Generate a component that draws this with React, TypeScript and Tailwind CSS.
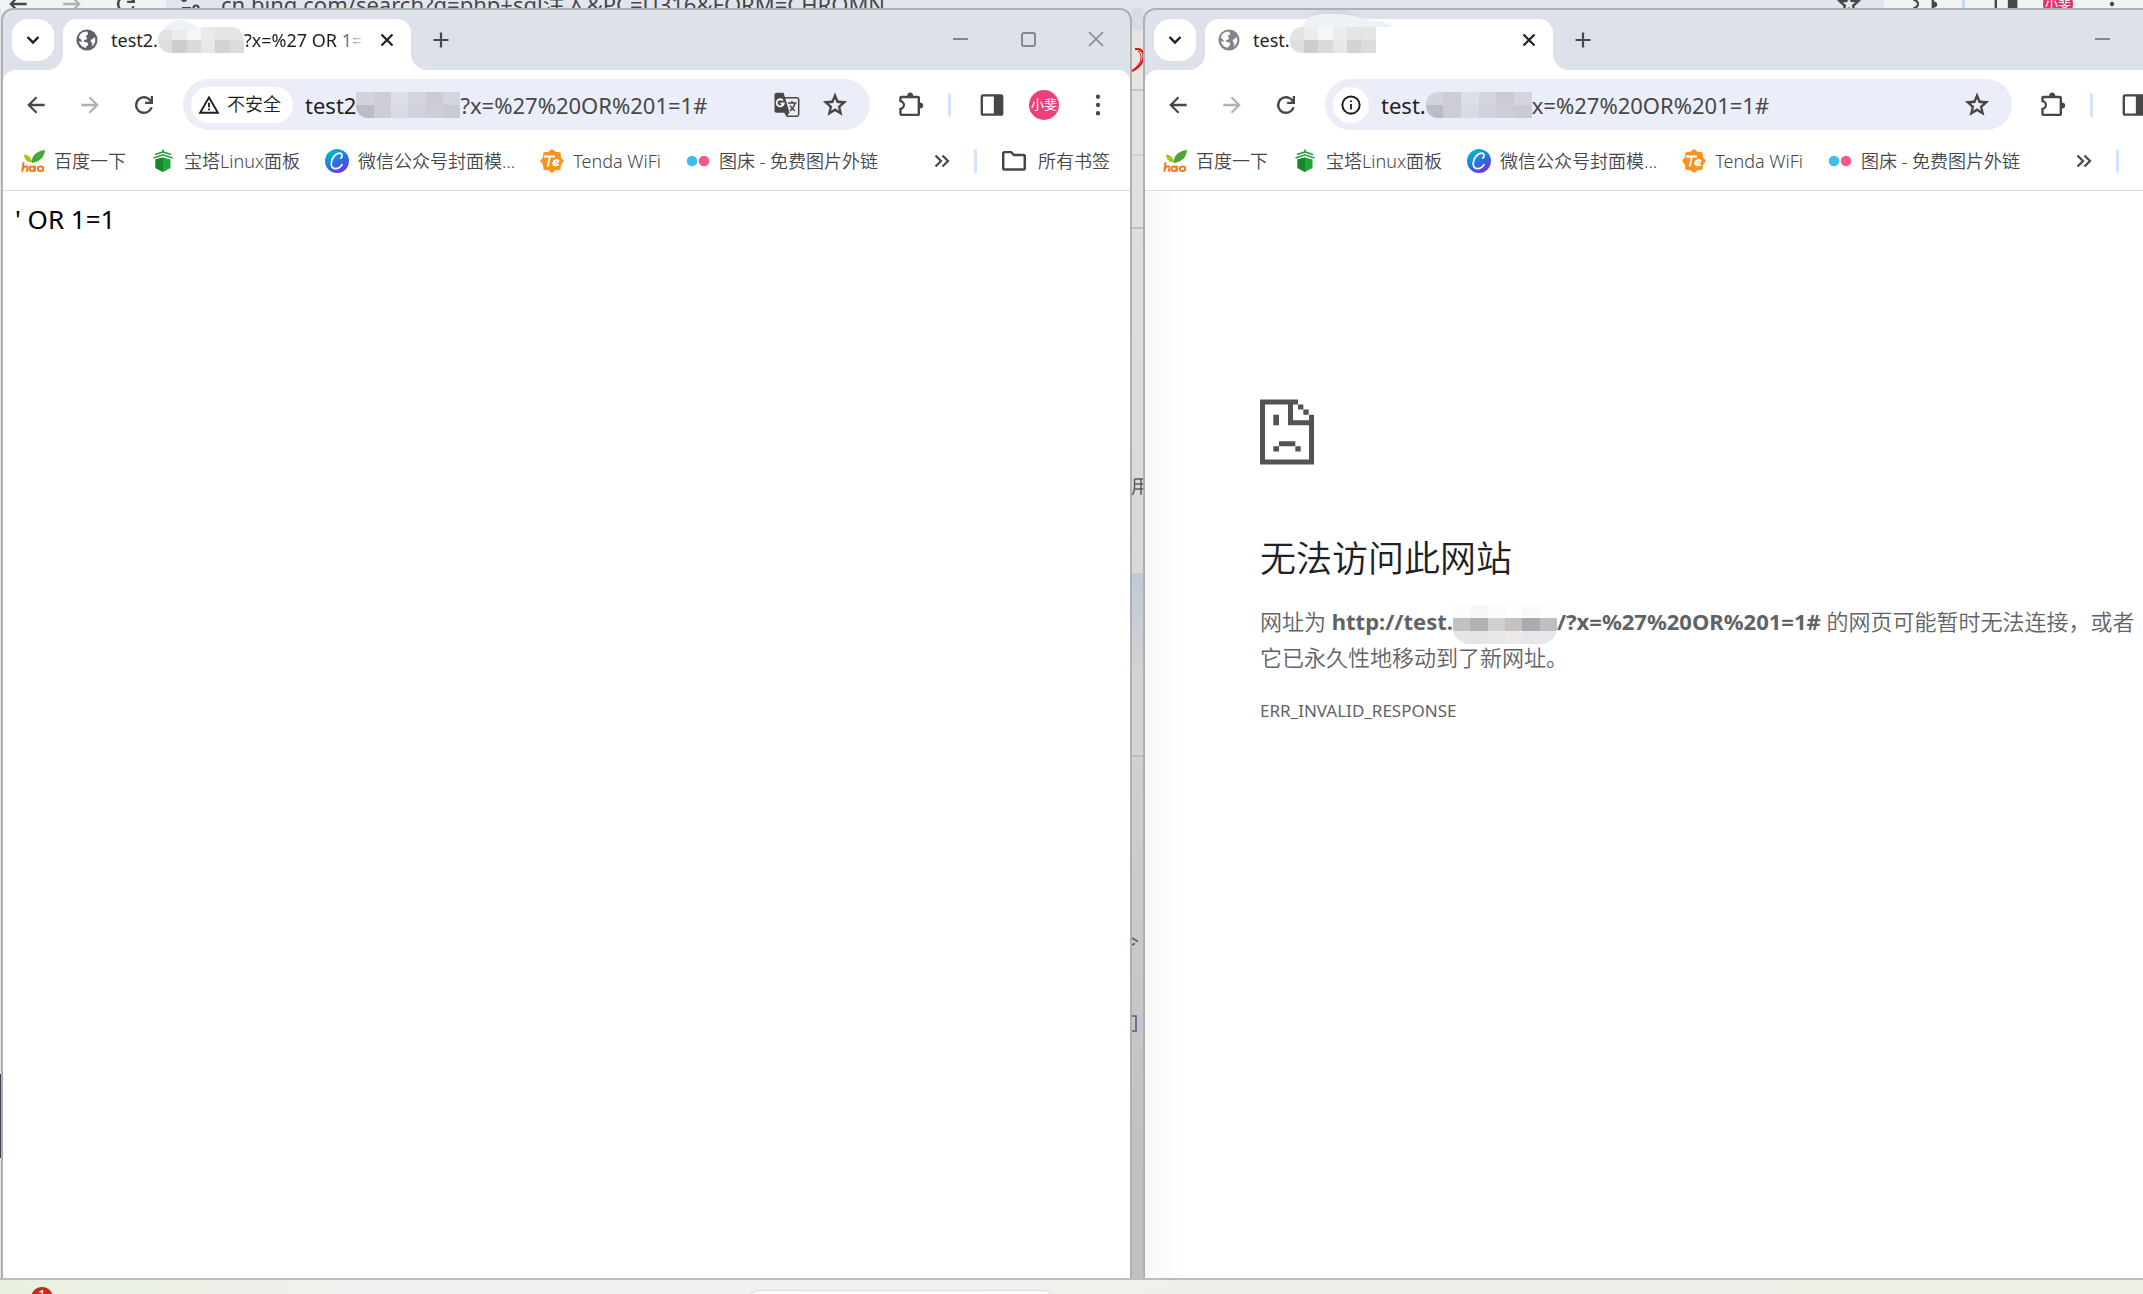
import type { ReactNode } from "react";

type Bookmark = { label: string; icon: ReactNode };

const font = "font-['Noto_Sans','Noto_Sans_CJK_SC',sans-serif]";

/* ---------- toolbar glyphs (24px material grid) ---------- */

function Glyph({ d, className = "size-[26px]" }: { d: string; className?: string }) {
  return (
    <svg viewBox="0 0 24 24" fill="currentColor" fillRule="evenodd" className={className} aria-hidden="true">
      <path d={d} />
    </svg>
  );
}

const BACK = "M20 10.9H7.9l5.3-5.3L11.8 4.1 3.9 12l7.9 7.9 1.4-1.5-5.3-5.3H20z";
const FORWARD = "M4 10.9h12.1l-5.3-5.3 1.4-1.5 7.9 7.9-7.9 7.9-1.4-1.5 5.3-5.3H4z";
const RELOAD =
  "M12 20.3a8.1 8.1 0 0 1-5.9-2.4 8.1 8.1 0 0 1 0-11.8A8.1 8.1 0 0 1 12 3.7c1.2 0 2.4.3 3.5.8a7.8 7.8 0 0 1 2.7 2.1V3.7h2.1v7.3h-7.3V8.9h4.3A6.1 6.1 0 0 0 12 5.9c-1.7 0-3.1.6-4.3 1.8A5.9 5.9 0 0 0 5.9 12c0 1.7.6 3.1 1.8 4.3A5.9 5.9 0 0 0 12 18.1c1.3 0 2.5-.4 3.6-1.1a5.9 5.9 0 0 0 2.2-3H20a8.2 8.2 0 0 1-8 6.3z";
const WARNING = "M.5 21.5 12 1.5l11.5 20zm3.6-2.1h15.8L12 5.6zM11 17.8v-2h2v2zm0-3.3v-5h2v5z";
const INFO =
  "M11 17h2v-6h-2zm1-8a1.1 1.1 0 1 0 0-2.2A1.1 1.1 0 0 0 12 9zm0 13.5A10.5 10.5 0 1 1 12 1.5a10.5 10.5 0 0 1 0 21zm0-2.2a8.3 8.3 0 1 0 0-16.6 8.3 8.3 0 0 0 0 16.6z";
const STAR =
  "m8.4 17.3 3.6-2.2 3.6 2.2-1-4.1 3.2-2.7-4.2-.4L12 6.2l-1.6 3.900-4.200.4 3.200 2.700zM5.100 22l1.900-8-6.200-5.400 8.200-.7L12 .5l3.100 7.400 8.100.7L17 14l1.900 8-6.900-4.200z";
const EXTENSION =
  "M3.2 22.2a2.1 2.1 0 0 1-2-2v-5.5c1.900 0 3.300-1.100 3.300-2.700 0-1.500-1.400-2.600-3.300-2.700V5.500c0-1.200.9-2 2-2h5.300c0-1.700 1-3 2.800-3s2.800 1.300 2.800 3h4.200c1.200 0 2 .8 2 2v4.300c1.700 0 3 1 3 2.700s-1.300 2.800-3 2.800v4.900c0 1.100-.8 2-2 2zm.2-2.200h14.700V5.700H3.400v1.900c1.900.8 3.100 2.400 3.100 4.400s-1.200 3.600-3.100 4.400z";
const SIDE_PANEL = "M3.5 22a2 2 0 0 1-2-2V4c0-1.100.9-2 2-2h17c1.100 0 2 .9 2 2v16a2 2 0 0 1-2 2zm.2-2.200h10V4.200h-10z";
const MENU =
  "M12 6.400a2 2 0 1 1 0-4 2 2 0 0 1 0 4zm0 7.600a2 2 0 1 1 0-4 2 2 0 0 1 0 4zm0 7.600a2 2 0 1 1 0-4 2 2 0 0 1 0 4z";
const FOLDER =
  "M3 21a2.100 2.100 0 0 1-2.100-2V4.800C.9 3.700 1.800 2.700 3 2.700h6.800L12.300 5.300H21c1.100 0 2.100.9 2.100 2V19a2.100 2.100 0 0 1-2.100 2zm.2-2.200h17.600V7.500h-9.400L8.900 4.900H3.200z";

function Globe({ className }: { className: string }) {
  return (
    <svg viewBox="0 0 24 24" className={className} aria-hidden="true">
      <circle cx="12" cy="12" r="11.5" fill="currentColor" />
      <path
        d="M3 9.500C3.500 7 5.500 4.500 8 3.400c1.800-.7 3.500-.6 5-.3-.4 1-.4 2.300.4 3.300-1.300.2-2.600.8-3 1.900 1.300.3 2 1.300 1.300 2.500-.6.9-2 .7-2.800 1.500-.5.600-.2 1.500.3 2 1.300.2 3.700.1 4.100 1.700.3 1.200-.9 2-1.700 2.600-.500.5-.6 1.200-.6 2-4.200-.6-7-3.500-7.900-7.500 1.200.2 2 .9 3.200.7.300-1.400-.9-2.900-3.300-4.300zM20.500 9c.7 2 .7 4 0 6-.7 1.700-1.800 3-3.500 4.200.2-1.400 1-2.300.6-3.700-.3-1-1.500-1.200-1.600-2.200-.2-1.300 1-2.100 2-2.700.6-.4 1.700-.9 2.500-1.600z"
        fill="#fff"
      />
    </svg>
  );
}

function Translate() {
  return (
    <svg viewBox="0 0 26 26" className="size-[26px]" aria-hidden="true">
      <path d="M10 5.700h13a1.700 1.700 0 0 1 1.700 1.700v15.200a1.700 1.700 0 0 1-1.700 1.700H13" fill="none" stroke="#474747" strokeWidth="1.500" />
      <path d="M2.500.8h7l1.400 4.200 4.600 15.800h-13a2 2 0 0 1-2-2v-16c0-1.100.9-2 2-2z" fill="#474747" />
      <path d="M10 20.300h5.500l-3 4.800z" fill="#474747" />
      <path d="M9 8.500A3.600 3.600 0 1 0 9.800 11.500H6.500" fill="none" stroke="#fff" strokeWidth="1.800" />
      <path
        d="M14 11h8.500M18 9v2M21 11c-.8 3.500-2.300 6-5 7.800M16 13.500c1 2.300 2.700 4 5.200 5.500"
        fill="none"
        stroke="#474747"
        strokeWidth="1.400"
      />
    </svg>
  );
}

/* ---------- bookmark favicons ---------- */

const bookmarks: Bookmark[] = [
  {
    label: "百度一下",
    icon: (
      <svg viewBox="0 0 24 24" className="size-6" aria-hidden="true">
        <path d="M3 5.500c4 .3 6.500 2.500 8 6.500L9 13.500C5 12 3 9.500 3 5.500z" fill="#a4c614" />
        <path d="M24 1c-.500 7-5 12-13.500 13C10.500 7 15 2 24 1z" fill="#4ba639" />
        <g fill="none" stroke="#f47a20" strokeWidth="2" strokeLinecap="round">
          <path d="M2.500 14 1.300 22M2 19.500c1.500-3 5-3 4.500-.5L6 22" />
          <ellipse cx="11" cy="19.700" rx="2.500" ry="2.300" />
          <path d="m14.200 17.500-.6 4.500" />
          <ellipse cx="19.500" cy="19.700" rx="2.700" ry="2.300" />
        </g>
      </svg>
    ),
  },
  {
    label: "宝塔Linux面板",
    icon: (
      <svg viewBox="0 0 24 24" className="size-6" aria-hidden="true">
        <path d="M12 .5V3M4 5.500 12 3l8 2.500M2.500 9 12 5.800 21.500 9" fill="none" stroke="#27a043" strokeWidth="1.700" />
        <path d="M4.500 10.500 12 8.500l7.500 2v8.500L12 23l-7.500-4z" fill="#20a53a" />
        <path d="M4.500 10.500 12 8.500V23l-7.500-4z" fill="#178530" />
      </svg>
    ),
  },
  {
    label: "微信公众号封面模...",
    icon: (
      <svg viewBox="0 0 24 24" className="size-6" aria-hidden="true">
        <defs>
          <linearGradient id="canva" x1="0.200" y1="0" x2="0.800" y2="1">
            <stop offset="0" stopColor="#00c4cc" />
            <stop offset="0.550" stopColor="#2a6fe0" />
            <stop offset="1" stopColor="#7d2ae8" />
          </linearGradient>
        </defs>
        <circle cx="12" cy="12" r="12" fill="url(#canva)" />
        <path
          d="M15.800 9c2-1.200 1.600-4.800-1.200-4.800-4 0-8.400 5-8.400 10.200 0 3.400 1.900 5.200 4.500 5.200 2.700 0 4.800-1.500 6.300-4"
          fill="none"
          stroke="#fff"
          strokeWidth="1.700"
          strokeLinecap="round"
        />
      </svg>
    ),
  },
  {
    label: "Tenda WiFi",
    icon: (
      <svg viewBox="0 0 24 24" className="size-6" aria-hidden="true">
        <path
          d="m12 0 3.600 2.800 4.900.5.500 4.900L24 12l-3 3.800-.5 4.900-4.900.5L12 24l-3.600-2.800-4.900-.5-.5-4.900L0 12l3-3.800.5-4.900 4.900-.5z"
          fill="#f7941d"
        />
        <path
          d="M4 7.500h11M9.800 7.500 7.800 17.500M12.500 14.500c3 .3 6.300-1 5.900-2.700-.4-1.500-4.600-.7-5.200 2-.5 2.600 2.800 3.200 5.600 1.700"
          fill="none"
          stroke="#fff"
          strokeWidth="1.900"
        />
      </svg>
    ),
  },
  {
    label: "图床 - 免费图片外链",
    icon: (
      <svg viewBox="0 0 24 24" className="size-6" aria-hidden="true">
        <circle cx="6" cy="12" r="5.300" fill="#3fbdf0" />
        <circle cx="18" cy="12" r="5.300" fill="#f4588f" />
      </svg>
    ),
  },
];

/* ---------- censored host names ---------- */

const mosaicRows = {
  tab: [
    ["bg-[#e2e2e2]", "bg-[#ececec]", "bg-[#f6f6f6]", "bg-[#ebebeb]", "bg-[#e4e4e4]", "bg-[#e6e6e6]"],
    ["bg-[#dedede]", "bg-[#cdcdcd]", "bg-[#dadada]", "bg-[#e8e8e8]", "bg-[#d3d3d3]", "bg-[#dcdcdc]"],
  ],
  url: [
    ["bg-[#d2d4dd]", "bg-[#cdcdd3]", "bg-[#dcdfea]", "bg-[#d4d4da]", "bg-[#cccbd0]", "bg-[#d3d5df]"],
    ["bg-[#bcbcc8]", "bg-[#cccdd5]", "bg-[#d8dbe6]", "bg-[#cfd2dd]", "bg-[#cdced7]", "bg-[#c9cbd4]"],
  ],
  page: [
    ["bg-[#fbfbfb]", "bg-[#f9f8f7]", "bg-[#fafbfb]", "bg-[#fdfdfd]", "bg-[#fafafa]", "bg-[#fdfdfd]"],
    ["bg-[#c1c0c5]", "bg-[#b4b1b1]", "bg-[#d0d0d2]", "bg-[#c4c1be]", "bg-[#a9abb2]", "bg-[#c0bec0]"],
    ["bg-[#e5e5e6]", "bg-[#e5e5e6]", "bg-[#e8e8ea]", "bg-[#ebeae8]", "bg-[#e6e7e9]", "bg-[#e6e7e9]"],
  ],
};

function Mosaic({ kind, className }: { kind: keyof typeof mosaicRows; className: string }) {
  return (
    <span className={`inline-flex shrink-0 flex-col overflow-hidden ${className}`} aria-hidden="true">
      {mosaicRows[kind].map((row, y) => (
        <span key={y} className="flex flex-1">
          {row.map((c, x) => (
            <span key={x} className={`flex-1 ${c}`} />
          ))}
        </span>
      ))}
    </span>
  );
}

/* ---------- browser window ---------- */

type WindowProps = {
  tabTitle: ReactNode;
  globe: string;
  security: ReactNode;
  url: ReactNode;
  canTranslate?: boolean;
  children: ReactNode;
};

function IconButton({ label, children, className = "" }: { label: string; children: ReactNode; className?: string }) {
  return (
    <button type="button" aria-label={label} className={`flex shrink-0 items-center justify-center ${className}`}>
      {children}
    </button>
  );
}

function TitleBar({ tabTitle, globe }: { tabTitle: ReactNode; globe: string }) {
  return (
    <header className="flex h-[60px] shrink-0 pl-[9px]">
      <IconButton label="搜索标签页" className="mt-[9px] size-[42px] rounded-2xl bg-white text-[#1f1f1f]">
        <svg viewBox="0 0 14 10" className="h-[10px] w-[14px]" fill="none" stroke="currentColor" strokeWidth="2.400" aria-hidden="true">
          <path d="m1.500 2 5.500 5.500L12.500 2" />
        </svg>
      </IconButton>
      <div className="relative ml-[9px] mt-[9px] flex w-[348px] shrink-0 items-center rounded-t-[14px] bg-white pb-[9px] pl-[13px] pr-4">
        <svg viewBox="0 0 16 16" className="absolute -left-4 bottom-0 size-4 fill-white" aria-hidden="true">
          <path d="M16 0v16H0A16 16 0 0 0 16 0z" />
        </svg>
        <svg viewBox="0 0 16 16" className="absolute -right-4 bottom-0 size-4 fill-white" aria-hidden="true">
          <path d="M0 0v16h16A16 16 0 0 1 0 0z" />
        </svg>
        <Globe className={`size-[22px] shrink-0 ${globe}`} />
        <div className="ml-[13px] flex min-w-0 flex-1 items-center whitespace-nowrap text-[18px] text-[#1f1f1f]">
          {tabTitle}
        </div>
        <IconButton label="关闭标签页" className="ml-3 size-4 text-[#1f1f1f]">
          <svg viewBox="0 0 14 14" className="size-[14px]" stroke="currentColor" strokeWidth="2.200" aria-hidden="true">
            <path d="m1.500 1.500 11 11M12.500 1.500l-11 11" />
          </svg>
        </IconButton>
      </div>
      <IconButton label="新标签页" className="ml-[22px] w-4 text-[#474747]">
        <svg viewBox="0 0 16 16" className="size-4" stroke="currentColor" strokeWidth="2.200" aria-hidden="true">
          <path d="M8 .5v15M.5 8h15" />
        </svg>
      </IconButton>
      <div className="ml-auto flex h-[58px] shrink-0 text-[#84878c]">
        <IconButton label="最小化" className="w-[68px]">
          <span className="h-[2px] w-[15px] bg-current" />
        </IconButton>
        <IconButton label="最大化" className="w-[68px]">
          <span className="size-[15px] rounded-[3px] border-2 border-current" />
        </IconButton>
        <IconButton label="关闭" className="w-[68px]">
          <svg viewBox="0 0 16 16" className="size-4" stroke="currentColor" strokeWidth="1.700" aria-hidden="true">
            <path d="m1 1 14 14M15 1 1 15" />
          </svg>
        </IconButton>
      </div>
    </header>
  );
}

function Toolbar({ security, url, canTranslate }: Pick<WindowProps, "security" | "url" | "canTranslate">) {
  return (
    <div className="flex h-[69px] shrink-0 items-center rounded-t-xl bg-white pl-5 pr-[19px] text-[#474747]">
      <IconButton label="后退">
        <Glyph d={BACK} />
      </IconButton>
      <IconButton label="前进" className="ml-7 text-[#b0b0b0]">
        <Glyph d={FORWARD} />
      </IconButton>
      <IconButton label="重新加载" className="ml-7">
        <Glyph d={RELOAD} />
      </IconButton>
      <div className="ml-[26px] flex h-[51px] min-w-0 flex-1 items-center rounded-full bg-[#ebeef8] pl-2 pr-[22px]">
        {security}
        <div className="flex min-w-0 flex-1 items-center whitespace-nowrap text-[22px] leading-7">{url}</div>
        {canTranslate && (
          <IconButton label="翻译此页" className="mr-[22px]">
            <Translate />
          </IconButton>
        )}
        <IconButton label="为此标签页添加书签">
          <Glyph d={STAR} />
        </IconButton>
      </div>
      <IconButton label="扩展程序" className="ml-7">
        <Glyph d={EXTENSION} />
      </IconButton>
      <span className="ml-6 h-6 w-[3px] rounded-full bg-[#d3e3fd]" />
      <IconButton label="侧边栏" className="ml-7">
        <Glyph d={SIDE_PANEL} />
      </IconButton>
      <button type="button" className="ml-6 size-[30px] shrink-0 rounded-full bg-[#ec407a] text-[13px] leading-none text-white">
        小斐
      </button>
      <IconButton label="更多" className="ml-[26px]">
        <Glyph d={MENU} />
      </IconButton>
    </div>
  );
}

function BookmarkBar() {
  return (
    <nav className="flex h-[52px] shrink-0 items-center border-b border-[#dcdde0] bg-white pb-[7px] pl-[18px] pr-5 text-[18px] font-[350] text-[#474747]">
      <div className="flex min-w-0 flex-1 items-center gap-[25px]">
        {bookmarks.map((b) => (
          <a key={b.label} href="#" className="flex shrink-0 items-center gap-[9px] whitespace-nowrap">
            {b.icon}
            {b.label}
          </a>
        ))}
      </div>
      <IconButton label="更多书签">
        <svg viewBox="0 0 16 14" className="h-[14px] w-4" fill="none" stroke="currentColor" strokeWidth="2.200" aria-hidden="true">
          <path d="m1.500 1.500 5.500 5.500-5.500 5.500M8.500 1.500 14 7l-5.500 5.500" />
        </svg>
      </IconButton>
      <span className="ml-6 h-6 w-[3px] rounded-full bg-[#d3e3fd]" />
      <a href="#" className="ml-6 flex shrink-0 items-center gap-[11px]">
        <Glyph d={FOLDER} />
        所有书签
      </a>
    </nav>
  );
}

function BrowserWindow({ tabTitle, globe, security, url, canTranslate, children }: WindowProps) {
  return (
    <section className="flex h-full w-full flex-col overflow-hidden rounded-t-xl border-2 border-b-0 border-[#aeb0b3] bg-[#dde1e9]">
      <TitleBar tabTitle={tabTitle} globe={globe} />
      <Toolbar security={security} url={url} canTranslate={canTranslate} />
      <BookmarkBar />
      {children}
    </section>
  );
}

/* ---------- what shows behind the two windows ---------- */

function BackdropWindow() {
  return (
    <div className="absolute inset-0 overflow-hidden bg-[#e4e8f1]" aria-hidden="true">
      <div className="-mt-[22px] flex h-[52px] items-center bg-[#f1f2f4] pl-[5px] pr-[18px] text-[#474747]">
        <Glyph d={BACK} />
        <Glyph d={FORWARD} className="ml-7 size-[26px] text-[#b0b0b0]" />
        <Glyph d={RELOAD} className="ml-7 size-[26px]" />
        <div className="ml-[27px] flex h-full flex-1 items-center bg-[#e1e5ef] pl-[15px] pr-[22px] text-[22px] leading-7">
          <svg viewBox="0 0 20 20" className="mr-5 size-5" fill="none" stroke="currentColor" strokeWidth="2.200">
            <path d="M8 5h11M1 14h9" />
            <circle cx="3" cy="5" r="2" />
            <circle cx="15" cy="14" r="2.500" />
          </svg>
          <span className="flex-1 whitespace-nowrap">cn.bing.com/search?q=php+sql注入&amp;PC=U316&amp;FORM=CHROMN</span>
          <Glyph d={STAR} />
        </div>
        <Glyph d={EXTENSION} className="ml-7 size-[26px]" />
        <span className="ml-6 h-6 w-[3px] bg-[#c5d9f5]" />
        <Glyph d={SIDE_PANEL} className="ml-7 size-[26px]" />
        <span className="ml-6 flex size-[30px] items-center justify-center rounded-full bg-[#e0336e] text-[13px] text-white">
          小斐
        </span>
        <Glyph d={MENU} className="ml-[26px] size-[26px]" />
      </div>
    </div>
  );
}

// sliver of the page behind, seen between the two windows
function BackdropSliver() {
  return (
    <div className="flex w-[11px] shrink-0 flex-col overflow-hidden text-[#55585e]" aria-hidden="true">
      <div className="h-[22px] shrink-0 bg-[#d8dce6]" />
      <div className="h-[61px] shrink-0 border-b-2 border-[#c6c6c6] bg-[#e6e5e3] pt-[18px]">
        <svg viewBox="0 0 12 24" className="h-6 w-3" fill="none" stroke="#e3141c">
          <path d="M3 1c7-1 11 5 7 13-2 4-6 7-10 9" strokeWidth="2.200" />
          <path d="M6 3c5 4 4 12-4 18" strokeWidth="1" />
        </svg>
      </div>
      <div className="h-[65px] shrink-0 border-b-2 border-[#cfcfcf] bg-[#e2e2e2]" />
      <div className="h-[73px] shrink-0 border-b-2 border-[#c0c0c0] bg-[#e0e0e0]" />
      <div className="h-[344px] shrink-0 bg-linear-to-b from-[#dedede] to-[#d8d8d8] pt-[249px]">
        <svg viewBox="0 0 12 18" className="h-[18px] w-3" fill="none" stroke="currentColor" strokeWidth="1.400">
          <path d="M2.500 1v8c0 4-.5 6-2.500 8M2.500 1H12M2.500 6H12M2.500 11H12M9 1v16" />
        </svg>
      </div>
      <div className="h-[184px] shrink-0 border-b-2 border-[#bfbfbf] bg-linear-to-b from-[#bfcad6] to-[#d3d4d4] to-60%" />
      <div className="flex min-h-0 flex-1 flex-col bg-linear-to-b from-[#d0d0d0] to-[#bcbcbc] pt-[180px]">
        <svg viewBox="0 0 12 12" className="h-3 w-3 shrink-0" fill="none" stroke="#4d5f86" strokeWidth="1.600">
          <path d="M0 1l6 3.500M0 8l3-1.500" />
        </svg>
        <svg viewBox="0 0 12 18" className="mt-[66px] h-[18px] w-3 shrink-0" fill="none" stroke="#51618a" strokeWidth="1.600">
          <path d="M0 1h4v15H0" />
        </svg>
        <div className="mt-[148px] flex-1 rounded-tr-lg bg-[#c0c0c0]" />
      </div>
    </div>
  );
}

function SadPage() {
  return (
    <svg viewBox="0 0 162 195" className="h-[66px] w-[54px] fill-[#535353]" aria-hidden="true">
      <path d="M0 0h114v15H99v47h63v133H0zM15 15v165h132V77H84V15z" fillRule="evenodd" />
      <path d="M114 15h16v15h-16zM130 30h16v16h-16zM147 46h15v20h-15z" />
      <path d="M40 46h17v31H40zM57 125h49v15H57zM40 140h17v16H40zM106 140h16v16h-16z" />
    </svg>
  );
}

export default function App() {
  return (
    <div className={`relative flex h-screen min-h-[720px] flex-col overflow-hidden ${font}`}>
      <BackdropWindow />

      <main className="relative mt-2 flex min-h-0 flex-1">
        <div className="flex w-px shrink-0 flex-col justify-end bg-[#e3e3e3] pb-[120px]" aria-hidden="true">
          <div className="h-[84px] bg-[#3c3f4f]" />
        </div>
        <div className="min-w-0 flex-1">
          <BrowserWindow
            globe="text-[#5f6368]"
            canTranslate
            tabTitle={
              <>
                test2.
                <span className="relative flex shrink-0">
                  <svg viewBox="0 0 36 10" className="absolute -top-[7px] left-1 h-[10px] w-9 fill-[#eef2f6]" aria-hidden="true">
                    <path d="M0 10C5 3 12 0 18 0s14 3 18 10z" />
                  </svg>
                  <Mosaic kind="tab" className="h-[26px] w-[86px] rounded-l-full rounded-tr-full" />
                </span>
                <span className="min-w-0 flex-1 overflow-hidden bg-linear-to-r from-[#1f1f1f] from-75% to-transparent bg-clip-text text-transparent">
                  ?x=%27 OR 1=
                </span>
              </>
            }
            security={
              <button
                type="button"
                className="mr-3 flex h-9 shrink-0 items-center gap-[7px] rounded-full bg-white pl-[7px] pr-3 text-[18px] font-[350] text-[#1f1f1f]"
              >
                <Glyph d={WARNING} className="size-[22px]" />
                不安全
              </button>
            }
            url={
              <>
                <span className="text-[#1f1f1f]">test2</span>
                <Mosaic kind="url" className="h-[26px] w-[104px] rounded-bl-xl" />
                ?x=%27%20OR%201=1#
              </>
            }
          >
            <p className="flex-1 bg-white px-3 py-2.5 text-[26px] leading-9 text-black">' OR 1=1</p>
          </BrowserWindow>
        </div>

        <BackdropSliver />

        <div className="w-[1000px] shrink-0">
          {/* runs past the right edge of the screen */}
          <div className="h-full w-[1131px]">
            <BrowserWindow
              globe="text-[#80868b]"
              tabTitle={
                <>
                  test.
                  <span className="relative flex shrink-0">
                    <svg viewBox="0 0 90 19" className="absolute -top-[19px] left-3 h-[19px] w-[90px]" aria-hidden="true">
                      <path d="M6 9C14 2 24 0 34 0c8 0 18 4 26 9z" fill="#d5dae3" />
                      <path d="M0 19c2-6 6-11 14-12 14-2 36-1 50 4 8 3 20 1 26 8z" fill="#eef1f5" />
                    </svg>
                    <Mosaic kind="tab" className="h-[26px] w-[86px] rounded-l-xl" />
                  </span>
                </>
              }
              security={
                <button
                  type="button"
                  aria-label="查看网站信息"
                  className="mr-3 flex size-9 shrink-0 items-center justify-center rounded-full bg-white text-[#1f1f1f]"
                >
                  <Glyph d={INFO} className="size-[22px]" />
                </button>
              }
              url={
                <>
                  <span className="text-[#1f1f1f]">test.</span>
                  <Mosaic kind="url" className="h-[26px] w-[106px] rounded-l-xl" />
                  x=%27%20OR%201=1#
                </>
              }
            >
              <article className="flex-1 bg-white bg-linear-to-r from-[#f8f8f8] to-white to-[40px] pl-[115px] pr-[129px] pt-[208px] text-[#5f6368]">
                <SadPage />
                <h1 className="mt-[67px] text-[36px] leading-[54px] font-[350] text-[#202124]">无法访问此网站</h1>
                <p className="mt-[17px] text-[22px] leading-9 font-[350]">
                  网址为{" "}
                  <b>
                    http://test.
                    <Mosaic kind="page" className="-my-3 h-[39px] w-[104px] rounded-b-2xl align-middle" />
                    /?x=%27%20OR%201=1#
                  </b>{" "}
                  的网页可能暂时无法连接，或者它已永久性地移动到了新网址。
                </p>
                <p className="mt-[18px] text-[17px] leading-9">ERR_INVALID_RESPONSE</p>
              </article>
            </BrowserWindow>
          </div>
        </div>
      </main>

      <footer className="relative flex h-4 shrink-0 overflow-hidden border-t-2 border-[#bdbdbd] bg-linear-to-r from-[#e9f0e0] via-[#f1f1f1] via-20% to-[#edf0e6]">
        <span className="ml-[31px] mt-[7px] flex h-[22px] w-[22px] shrink-0 justify-center rounded-full bg-[#c42b1c] text-[14px] leading-4 text-white">
          1
        </span>
        <span className="ml-[694px] mt-[10px] h-10 w-[308px] shrink-0 rounded-xl border border-[#dcdcdc] bg-[#fafafa]" />
      </footer>
    </div>
  );
}
